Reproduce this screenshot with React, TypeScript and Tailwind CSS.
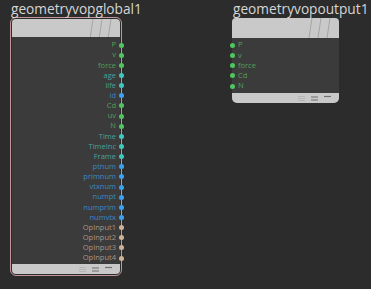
import React from 'react';

type Port = { name: string; kind: 'vec' | 'float' | 'int' | 'op' };

const dotColor: Record<Port['kind'], string> = {
  vec: 'bg-[#4fc65e]',
  float: 'bg-[#3fc9bd]',
  int: 'bg-[#3aa2f2]',
  op: 'bg-[#cfb196]',
};

const labelColor: Record<Port['kind'], string> = {
  vec: 'text-[#52a05a]',
  float: 'text-[#45a39d]',
  int: 'text-[#3888ca]',
  op: 'text-[#a99584]',
};

const globalPorts: Port[] = [
  { name: 'P', kind: 'vec' },
  { name: 'v', kind: 'vec' },
  { name: 'force', kind: 'vec' },
  { name: 'age', kind: 'float' },
  { name: 'life', kind: 'float' },
  { name: 'id', kind: 'int' },
  { name: 'Cd', kind: 'vec' },
  { name: 'uv', kind: 'vec' },
  { name: 'N', kind: 'vec' },
  { name: 'Time', kind: 'float' },
  { name: 'TimeInc', kind: 'float' },
  { name: 'Frame', kind: 'float' },
  { name: 'ptnum', kind: 'int' },
  { name: 'primnum', kind: 'int' },
  { name: 'vtxnum', kind: 'int' },
  { name: 'numpt', kind: 'int' },
  { name: 'numprim', kind: 'int' },
  { name: 'numvtx', kind: 'int' },
  { name: 'OpInput1', kind: 'op' },
  { name: 'OpInput2', kind: 'op' },
  { name: 'OpInput3', kind: 'op' },
  { name: 'OpInput4', kind: 'op' },
];

const outputPorts: Port[] = [
  { name: 'P', kind: 'vec' },
  { name: 'v', kind: 'vec' },
  { name: 'force', kind: 'vec' },
  { name: 'Cd', kind: 'vec' },
  { name: 'N', kind: 'vec' },
];

// slanted stripes in the node header
const HeaderStripes = () => (
  <svg width="30" height="20" viewBox="0 0 30 20" className="absolute right-[3px] top-0">
    <path d="M3 20 L6 0 M12 20 L15 0 M21 20 L24 0" stroke="#9c9c9c" strokeWidth="0.8" fill="none" />
  </svg>
);

// display / render flags in the node footer
const FooterFlags = () => (
  <div className="flex items-center gap-[6px] pr-[8px]">
    <svg width="7" height="7" viewBox="0 0 7 7">
      <path d="M0 1.5 H7 M0 3.5 H7 M0 5.5 H7" stroke="#b0b0b0" strokeWidth="0.8" />
    </svg>
    <svg width="7" height="7" viewBox="0 0 7 7">
      <path d="M0 2 H7 M0 5 H7" stroke="#6e6e6e" strokeWidth="1.2" />
    </svg>
    <svg width="7" height="7" viewBox="0 0 7 7">
      <path d="M0 1.5 H7" stroke="#6e6e6e" strokeWidth="1.2" />
    </svg>
  </div>
);

const NodeTitle = ({ text }: { text: string }) => (
  <div className="text-[13.7px] leading-[17px] whitespace-nowrap text-[#d6d6d6]">{text}</div>
);

export default function App() {
  return (
    <div
      className="relative w-[371px] h-[289px] bg-[#2c2c2c] overflow-hidden"
      style={{ fontFamily: '"Open Sans", "Noto Sans", sans-serif' }}
    >
      {/* geometryvopglobal1 (selected) */}
      <div className="absolute left-[10px] top-0 w-[112px]">
        <div className="pl-[1px] h-[17px]">
          <NodeTitle text="geometryvopglobal1" />
        </div>
        <div className="border border-[#c3979a] rounded-[6px] p-px bg-[#2c2c2c]">
          <div className="relative rounded-[5px] bg-[#3b3b3b]">
            <div className="relative h-[18px] bg-[#c9c9c9] rounded-t-[4px] overflow-hidden">
              <HeaderStripes />
            </div>
            <div className="flex flex-col pt-[3px] pb-[1px]">
              {globalPorts.map((p) => (
                <div key={p.name} className="flex items-center justify-end h-[10.15px] -mr-[4px]">
                  <span className={`text-[7.5px] leading-none ${labelColor[p.kind]}`}>{p.name}</span>
                  <span className={`ml-[3px] w-[5px] h-[5px] rounded-full ${dotColor[p.kind]}`} />
                </div>
              ))}
            </div>
            <div className="h-[10px] bg-[#c9c9c9] rounded-b-[4px] flex items-center justify-end">
              <FooterFlags />
            </div>
          </div>
        </div>
      </div>

      {/* geometryvopoutput1 */}
      <div className="absolute left-[231px] top-0 w-[109px]">
        <div className="pl-[2px] h-[17px]">
          <NodeTitle text="geometryvopoutput1" />
        </div>
        <div className="p-px">
          <div className="relative rounded-[5px] bg-[#3b3b3b]">
            <div className="relative h-[20px] bg-[#c9c9c9] rounded-t-[4px] overflow-hidden">
              <HeaderStripes />
            </div>
            <div className="flex flex-col pt-[2px] pb-[2px]">
              {outputPorts.map((p) => (
                <div key={p.name} className="flex items-center h-[10.25px] -ml-[2px]">
                  <span className={`mr-[3px] w-[5px] h-[5px] rounded-full ${dotColor[p.kind]}`} />
                  <span className={`text-[7.5px] leading-none ${labelColor[p.kind]}`}>{p.name}</span>
                </div>
              ))}
            </div>
            <div className="h-[10px] bg-[#c9c9c9] rounded-b-[5px] flex items-center justify-end">
              <FooterFlags />
            </div>
          </div>
        </div>
      </div>
    </div>
  );
}
